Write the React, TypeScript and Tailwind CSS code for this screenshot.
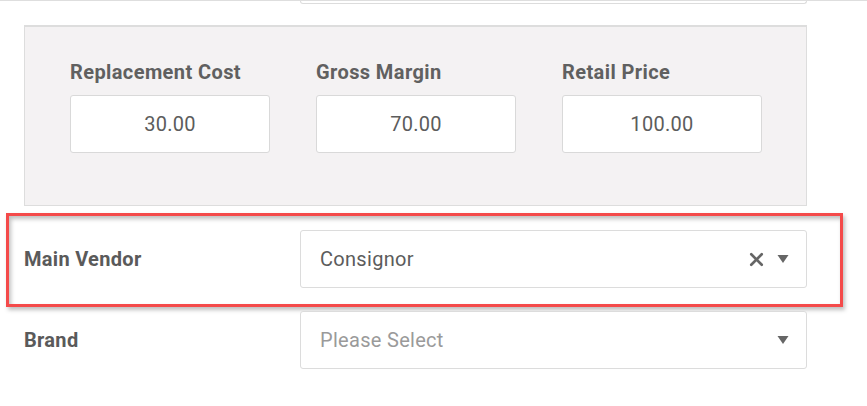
import { X } from 'lucide-react'

function Caret() {
  return (
    <svg width="12" height="10" viewBox="0 0 12 10" className="text-[#666]">
      <path d="M0.5 1 L11.5 1 L6 9 Z" fill="currentColor" />
    </svg>
  )
}

function PriceField({ label, value }: { label: string; value: string }) {
  return (
    <div className="flex w-[200px] flex-col">
      <div className="h-[24px] text-[20px] font-bold leading-[24px] tracking-[0.4px] text-[#606060]">
        {label}
      </div>
      <div className="mt-[11px] flex h-[58px] items-center justify-center rounded-[3px] border border-[#d9d9d9] bg-white text-[20px] tracking-[0.3px] text-[#5c5c5c]">
        {value}
      </div>
    </div>
  )
}

export default function App() {
  return (
    <div
      className="h-[406px] w-[867px] overflow-hidden bg-white"
      style={{ fontFamily: 'Roboto, "Liberation Sans", sans-serif' }}
    >
      {/* tail of the field above */}
      <div className="border-t border-[#dedede]">
        <div className="ml-[300px] h-[3px] w-[507px] rounded-b-[3px] border-x border-b border-[#dcdcdc]" />
      </div>

      {/* pricing panel */}
      <div className="ml-[24px] mt-[21px] h-[181px] w-[783px] border border-t-2 border-[#dddddd] bg-[#f4f2f3] pl-[45px] pt-[33px]">
        <div className="flex gap-[46px]">
          <PriceField label="Replacement Cost" value="30.00" />
          <PriceField label="Gross Margin" value="70.00" />
          <PriceField label="Retail Price" value="100.00" />
        </div>
      </div>

      {/* highlighted vendor row */}
      <div className="ml-[6px] mt-[7px] h-[94px] w-[837px] border-[3px] border-[#f44a4a] shadow-[2px_3px_4px_rgba(0,0,0,0.25),inset_2px_3px_4px_rgba(0,0,0,0.25)]">
        <div className="flex items-center pl-[15px] pt-[14px]">
          <div className="w-[276px] text-[20px] font-bold tracking-[0.3px] text-[#5a5a5a]">Main Vendor</div>
          <div className="flex h-[58px] w-[507px] items-center rounded-[3px] border border-[#dcdcdc] bg-white pl-[19px] pr-[17px] text-[20px] tracking-[0.3px] text-[#5c5c5c]">
            <span className="flex-1">Consignor</span>
            <X size={21} strokeWidth={3} className="mr-[10px] text-[#666]" />
            <Caret />
          </div>
        </div>
      </div>

      {/* brand row */}
      <div className="ml-[24px] mt-[4px] flex items-center">
        <div className="w-[276px] text-[20px] font-bold tracking-[0.3px] text-[#5a5a5a]">Brand</div>
        <div className="flex h-[58px] w-[507px] items-center rounded-[3px] border border-[#dcdcdc] bg-white pl-[19px] pr-[17px] text-[20px] tracking-[0.3px] text-[#9a9a9a]">
          <span className="flex-1">Please Select</span>
          <Caret />
        </div>
      </div>
    </div>
  )
}
